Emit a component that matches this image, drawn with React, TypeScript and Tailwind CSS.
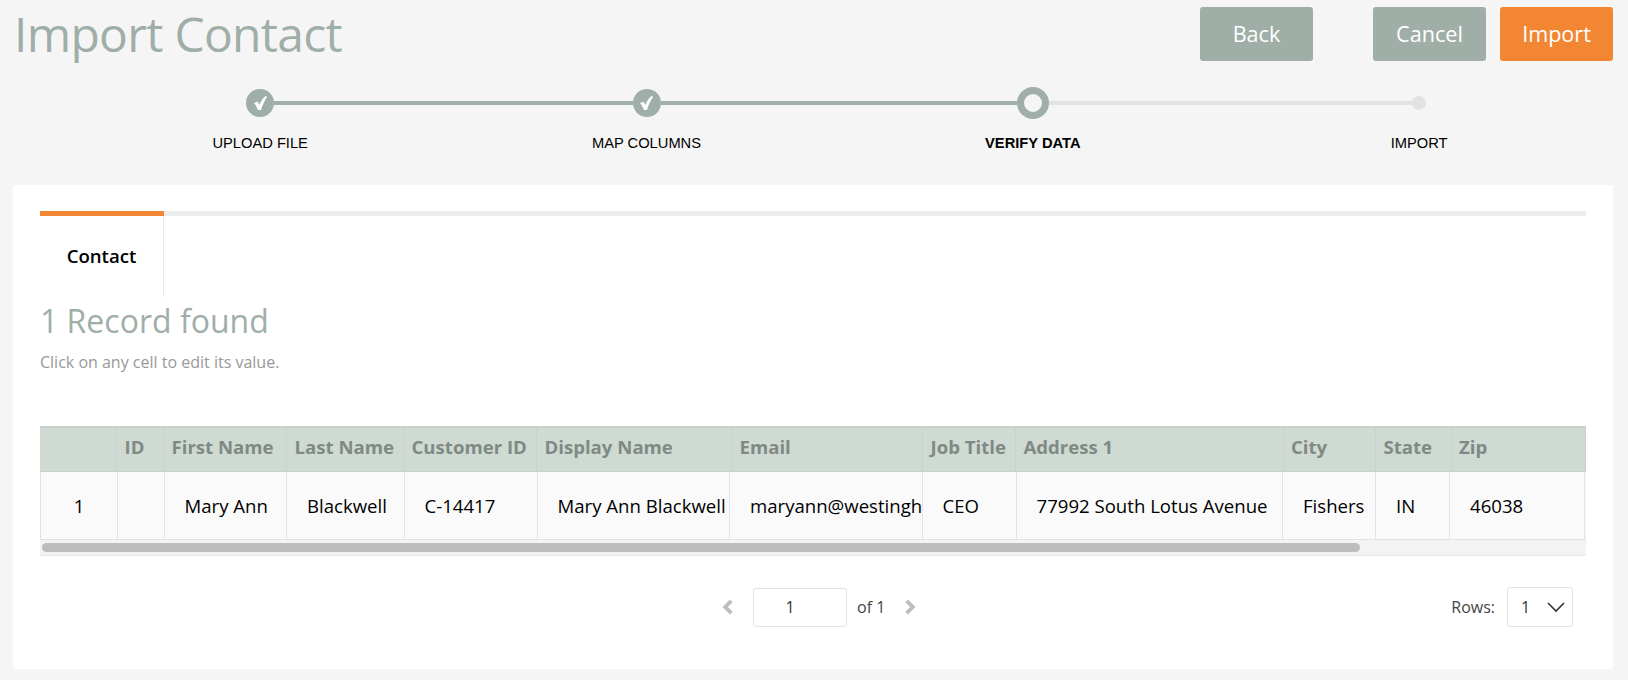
const sans = "font-['Open_Sans',sans-serif]";

const columns = [
  { label: '', value: '1', head: 'w-[77px]', cell: 'w-[77px] text-center' },
  { label: 'ID', value: '', head: 'w-[47px]', cell: 'w-[46.5px]' },
  { label: 'First Name', value: 'Mary Ann', head: 'w-[123px]', cell: 'w-[122.5px]' },
  { label: 'Last Name', value: 'Blackwell', head: 'w-[117px]', cell: 'w-[117.5px]' },
  { label: 'Customer ID', value: 'C-14417', head: 'w-[133px]', cell: 'w-[133px]' },
  { label: 'Display Name', value: 'Mary Ann Blackwell', head: 'w-[195px]', cell: 'w-[192.5px]' },
  { label: 'Email', value: 'maryann@westingh', head: 'w-[191px]', cell: 'w-[192.5px]' },
  { label: 'Job Title', value: 'CEO', head: 'w-[93px]', cell: 'w-[94px]' },
  { label: 'Address 1', value: '77992 South Lotus Avenue', head: 'w-[267.5px]', cell: 'w-[266.5px]' },
  { label: 'City', value: 'Fishers', head: 'w-[92.5px]', cell: 'w-[93px]' },
  { label: 'State', value: 'IN', head: 'w-[75.5px]', cell: 'w-[74px]' },
  { label: 'Zip', value: '46038', head: 'w-[134px]', cell: 'w-[134.5px]' },
];

function CheckCircle() {
  return (
    <div className="flex h-[28px] w-[28px] shrink-0 items-center justify-center rounded-full bg-[#a0aea8]">
      <svg width="15" height="16" viewBox="0 0 15 16">
        <path d="M1 8 L4.5 6.5 L6.3 10 C7.8 6 10 3 13 .8 L14 2 C11.5 5.5 9.5 10 8 15 L5 15 C4 12.5 2.8 10.2 1 8 Z" fill="#fff" />
      </svg>
    </div>
  );
}

function Step({
  label,
  left,
  right,
  bold,
  children,
}: {
  label: string;
  left: string;
  right: string;
  bold?: boolean;
  children: React.ReactNode;
}) {
  return (
    <div className="flex w-[386.33px] shrink-0 flex-col items-center">
      <div className="flex h-[32px] w-full items-center">
        <div className={`h-[4px] flex-1 ${left}`} />
        {children}
        <div className={`h-[4px] flex-1 ${right}`} />
      </div>
      <div className={`mt-[15px] font-['Liberation_Sans',sans-serif] text-[14.7px] leading-[18px] text-black ${bold ? 'font-bold' : ''}`}>
        {label}
      </div>
    </div>
  );
}

export default function App() {
  return (
    <div className={`h-[680px] w-[1628px] overflow-hidden bg-[#f5f5f5] pt-[7px] pr-[15px] pl-[13px] ${sans}`}>
      <div className="flex h-[54px] items-center">
        <h1 className="flex-1 pl-px text-[48px] leading-[54px] font-normal tracking-[-0.7px] text-[#a0aea8]">Import Contact</h1>
        <button className="flex h-[54px] w-[113px] items-center justify-center rounded-[3px] bg-[#a0aea8] text-[21.6px] text-white">Back</button>
        <button className="ml-[60px] flex h-[54px] w-[113px] items-center justify-center rounded-[3px] bg-[#a0aea8] text-[21.6px] text-white">Cancel</button>
        <button className="ml-[14px] flex h-[54px] w-[113px] items-center justify-center rounded-[3px] bg-[#f28633] text-[21.6px] text-white">Import</button>
      </div>

      <div className="mt-[26px] flex pl-[54px]">
        <Step label="UPLOAD FILE" left="bg-transparent" right="bg-[#a0aea8]"><CheckCircle /></Step>
        <Step label="MAP COLUMNS" left="bg-[#a0aea8]" right="bg-[#a0aea8]"><CheckCircle /></Step>
        <Step label="VERIFY DATA" left="bg-[#a0aea8]" right="bg-[#e2e2e2]" bold>
          <div className="h-[32px] w-[32px] shrink-0 rounded-full border-[7px] border-[#a0aea8] bg-[#f5f5f5]" />
        </Step>
        <Step label="IMPORT" left="bg-[#e2e2e2]" right="bg-transparent">
          <div className="h-[14px] w-[14px] shrink-0 rounded-full bg-[#e2e2e2]" />
        </Step>
      </div>

      <div className="mt-[33px] h-[484px] rounded-[3px] bg-white px-[27px] pt-[26px]">
        <div className="flex h-[5px] bg-[#ececec]">
          <div className="w-[124px] bg-[#f28633]" />
        </div>
        <div className="flex h-[81px] w-[124px] items-center justify-center border-r border-[#e8e8e8] pb-[2px] text-[18.6px] font-semibold text-black">Contact</div>

        <h2 className="mt-[2px] text-[32px] leading-[44px] font-normal text-[#a0aea8]">1 Record found</h2>
        <p className="mt-[9px] text-[16px] leading-[20px] text-[#999]">Click on any cell to edit its value.</p>

        <div className="mt-[54px] overflow-hidden">
          <div className="flex h-[46px] border-t-2 border-b border-[#c7d3ca] bg-[#cfdad2]">
            {columns.map((col) => (
              <div key={col.label} className={`flex shrink-0 items-center border-r border-[#c7d3ca] pb-[6px] pl-[7.5px] text-[18.6px] font-bold whitespace-nowrap text-[#7f8a84] ${col.head}`}>
                {col.label}
              </div>
            ))}
          </div>
          <div className="flex h-[68px] border-b border-l border-[#e3e3e3] bg-[#fafafa]">
            {columns.map((col) => (
              <div key={col.label} className={`flex shrink-0 items-center overflow-hidden border-r border-[#e3e3e3] text-[18.6px] whitespace-nowrap text-black ${col.cell} ${col.value === '1' ? 'justify-center' : 'pl-[20px]'}`}>
                {col.value}
              </div>
            ))}
          </div>
          <div className="flex h-[16px] items-center border-b border-[#e8e8e8] bg-[#f3f3f3] pl-[2px]">
            <div className="h-[9px] w-[1318px] rounded-full bg-[#bdbdbd]" />
          </div>
        </div>

        <div className="mt-[31px] flex h-[40px] items-center">
          <svg className="ml-[681px]" width="14" height="18" viewBox="0 0 12 16">
            <path d="M9 2.5 L3.5 8 L9 13.5" fill="none" stroke="#bdbdbd" strokeWidth="3.4" />
          </svg>
          <div className="ml-[18px] flex h-[39px] w-[94px] items-center justify-center rounded-[3px] border border-[#e3e3e3] pr-[20px] text-[16px] text-[#333]">1</div>
          <span className="ml-[10px] text-[16px] text-[#444]">of 1</span>
          <svg className="ml-[18px]" width="14" height="18" viewBox="0 0 12 16">
            <path d="M3 2.5 L8.5 8 L3 13.5" fill="none" stroke="#bdbdbd" strokeWidth="3.4" />
          </svg>
          <span className="ml-auto text-[16px] text-[#444]">Rows:</span>
          <div className="mr-[13px] ml-[12px] flex h-[40px] w-[66px] items-center justify-between rounded-[3px] border border-[#e3e3e3] pr-[6px] pl-[13px] text-[16px] text-[#333]">
            1
            <svg width="20" height="12" viewBox="0 0 20 12">
              <path d="M2 2 L10 10 L18 2" fill="none" stroke="#333" strokeWidth="1.6" />
            </svg>
          </div>
        </div>
      </div>
    </div>
  );
}
